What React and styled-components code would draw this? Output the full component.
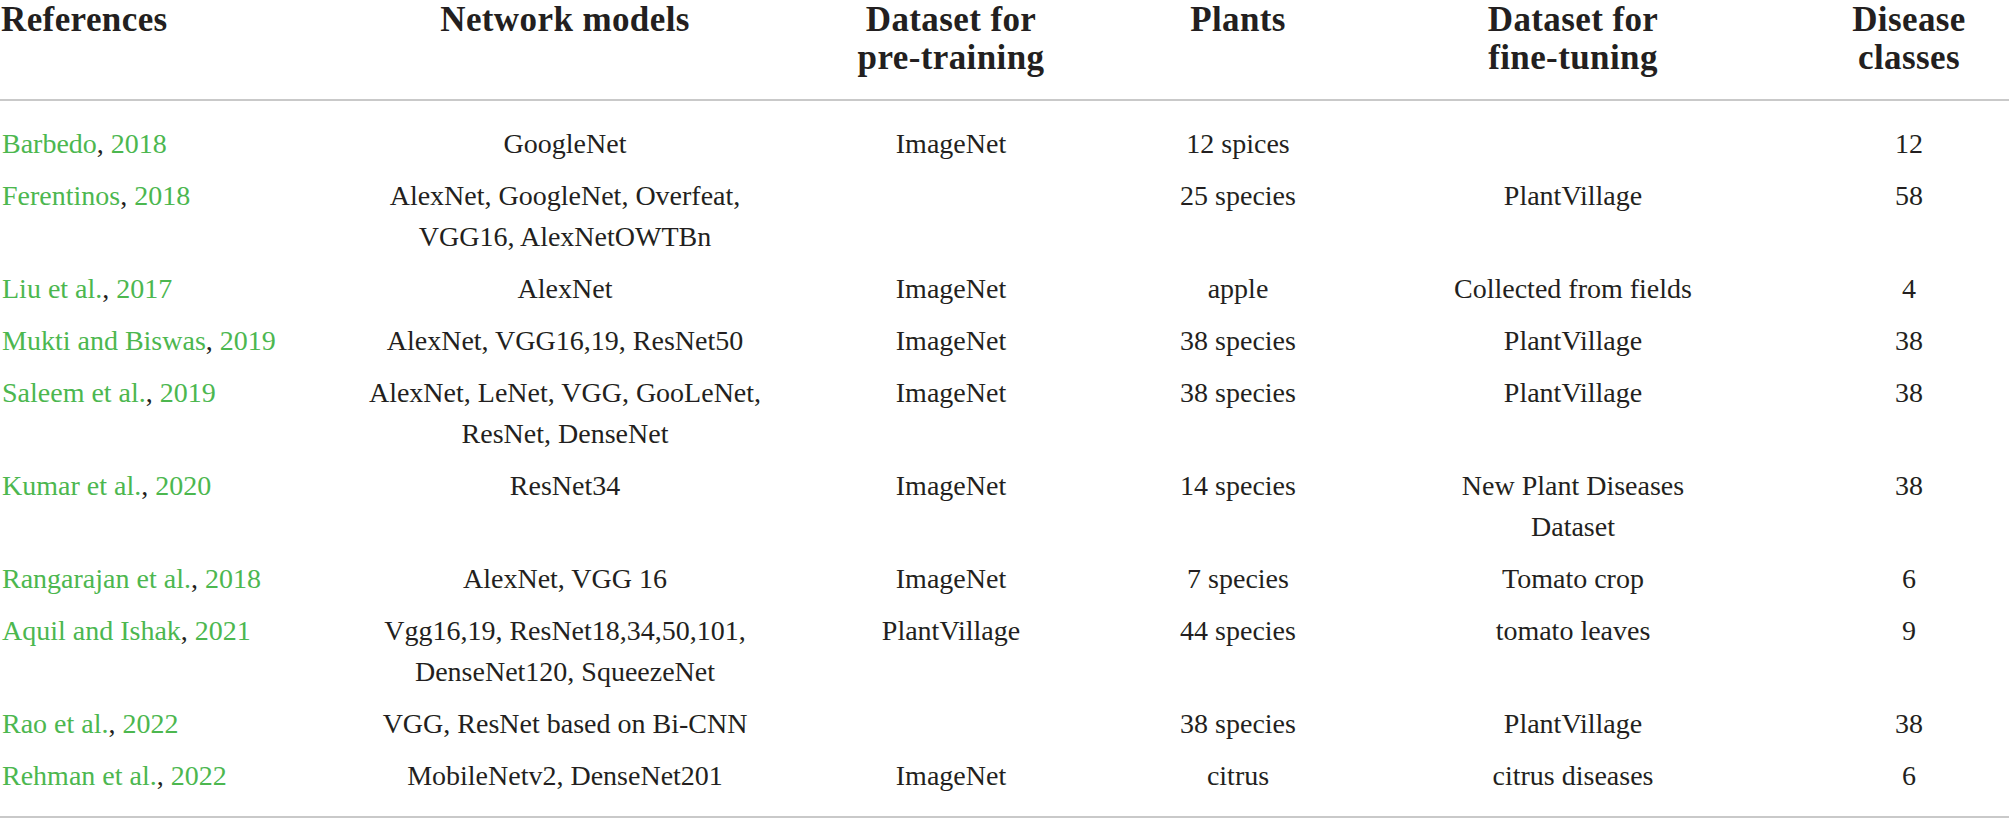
import React from 'react'
import styled, { createGlobalStyle } from 'styled-components'

const GlobalStyle = createGlobalStyle`
  html, body {
    margin: 0;
    padding: 0;
    background: #ffffff;
  }
  body {
    font-family: "Liberation Serif", "Times New Roman", serif;
    color: #231f20;
    overflow: hidden;
  }
`

const columns = '367px 396px 376px 198px 472px 200px'

const Table = styled.div`
  width: 2009px;
  display: flex;
  flex-direction: column;
`

const HeaderRow = styled.div`
  display: grid;
  grid-template-columns: ${columns};
  padding: 1px 0 22px;
  border-bottom: 2px solid #c9c9c9;
`

const HeadCell = styled.div`
  font-weight: 700;
  font-size: 35px;
  line-height: 38px;
  letter-spacing: 0.4px;
  text-align: ${(p) => (p.$left ? 'left' : 'center')};
  padding-left: ${(p) => (p.$left ? '1px' : '0')};
`

const Body = styled.div`
  display: flex;
  flex-direction: column;
  padding: 17px 0 14px;
  border-bottom: 2px solid #c9c9c9;
`

const Row = styled.div`
  display: grid;
  grid-template-columns: ${columns};
  padding: 5px 0 6px;
`

const Cell = styled.div`
  font-size: 28px;
  line-height: 41px;
  text-align: ${(p) => (p.$left ? 'left' : 'center')};
  padding-left: ${(p) => (p.$left ? '2px' : '0')};
  white-space: nowrap;
`

const Cite = styled.span`
  color: #4cb74f;
`

const Line = styled.div``

const headers = [
  ['References'],
  ['Network models'],
  ['Dataset for', 'pre-training'],
  ['Plants'],
  ['Dataset for', 'fine-tuning'],
  ['Disease', 'classes'],
]

const rows = [
  { author: 'Barbedo', year: '2018', models: ['GoogleNet'], pre: 'ImageNet', plants: '12 spices', fine: [], classes: '12' },
  { author: 'Ferentinos', year: '2018', models: ['AlexNet, GoogleNet, Overfeat,', 'VGG16, AlexNetOWTBn'], pre: '', plants: '25 species', fine: ['PlantVillage'], classes: '58' },
  { author: 'Liu et al.', year: '2017', models: ['AlexNet'], pre: 'ImageNet', plants: 'apple', fine: ['Collected from fields'], classes: '4' },
  { author: 'Mukti and Biswas', year: '2019', models: ['AlexNet, VGG16,19, ResNet50'], pre: 'ImageNet', plants: '38 species', fine: ['PlantVillage'], classes: '38' },
  { author: 'Saleem et al.', year: '2019', models: ['AlexNet, LeNet, VGG, GooLeNet,', 'ResNet, DenseNet'], pre: 'ImageNet', plants: '38 species', fine: ['PlantVillage'], classes: '38' },
  { author: 'Kumar et al.', year: '2020', models: ['ResNet34'], pre: 'ImageNet', plants: '14 species', fine: ['New Plant Diseases', 'Dataset'], classes: '38' },
  { author: 'Rangarajan et al.', year: '2018', models: ['AlexNet, VGG 16'], pre: 'ImageNet', plants: '7 species', fine: ['Tomato crop'], classes: '6' },
  { author: 'Aquil and Ishak', year: '2021', models: ['Vgg16,19, ResNet18,34,50,101,', 'DenseNet120, SqueezeNet'], pre: 'PlantVillage', plants: '44 species', fine: ['tomato leaves'], classes: '9' },
  { author: 'Rao et al.', year: '2022', models: ['VGG, ResNet based on Bi-CNN'], pre: '', plants: '38 species', fine: ['PlantVillage'], classes: '38' },
  { author: 'Rehman et al.', year: '2022', models: ['MobileNetv2, DenseNet201'], pre: 'ImageNet', plants: 'citrus', fine: ['citrus diseases'], classes: '6' },
]

function Lines({ items }) {
  return items.map((t) => <Line key={t}>{t}</Line>)
}

export default function App() {
  return (
    <>
      <GlobalStyle />
      <Table>
        <HeaderRow>
          {headers.map((h, i) => (
            <HeadCell key={i} $left={i === 0}>
              <Lines items={h} />
            </HeadCell>
          ))}
        </HeaderRow>
        <Body>
          {rows.map((r) => (
            <Row key={r.author}>
              <Cell $left>
                <Cite>{r.author}</Cite>, <Cite>{r.year}</Cite>
              </Cell>
              <Cell>
                <Lines items={r.models} />
              </Cell>
              <Cell>{r.pre}</Cell>
              <Cell>{r.plants}</Cell>
              <Cell>
                <Lines items={r.fine} />
              </Cell>
              <Cell>{r.classes}</Cell>
            </Row>
          ))}
        </Body>
      </Table>
    </>
  )
}
